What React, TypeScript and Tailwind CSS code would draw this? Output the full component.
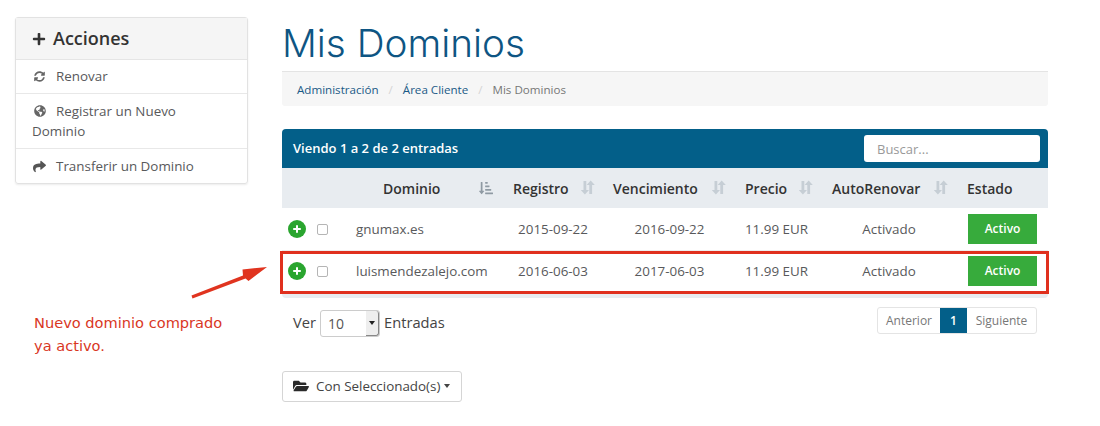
import { FaFolderOpen, FaGlobeAmericas, FaPlus, FaShare, FaSortAmountDownAlt, FaSyncAlt } from 'react-icons/fa';

const ROWS = [
  { domain: 'gnumax.es', start: '2015-09-22', end: '2016-09-22' },
  { domain: 'luismendezalejo.com', start: '2016-06-03', end: '2017-06-03' },
];

function SortIcon() {
  return (
    <svg width="15" height="15" viewBox="0 0 15 15" className="text-[#c6ced5]" fill="currentColor">
      <path d="M3.500 1h2.800v9H9l-4.100 4.500L.8 10h2.700z" />
      <path d="M9.300 14h2.800V5h2.700L10.700.5 6.600 5h2.700z" />
    </svg>
  );
}

function PlusBadge() {
  return (
    <svg width="18" height="18" viewBox="0 0 18 18" className="shrink-0">
      <circle cx="9" cy="9" r="9" fill="#2aa52f" />
      <path d="M9 5.200v7.600M5.200 9h7.600" stroke="#fff" strokeWidth="2" />
    </svg>
  );
}

function Head({ label, width, pad, sort = true, active = false }: { label: string; width: string; pad: string; sort?: boolean; active?: boolean }) {
  return (
    <th className={`${width} ${pad} h-[40px] py-0 pr-0 text-left font-semibold text-[14px] text-[#333] relative`}>
      {label}
      {sort && !active && <span className="absolute right-[9px] top-[12px]"><SortIcon /></span>}
      {active && <FaSortAmountDownAlt className="absolute right-[9px] top-[13px] text-[14px] text-[#8f9aa3]" />}
    </th>
  );
}

export default function App() {
  return (
    <div className="relative w-[1100px] h-[426px] overflow-hidden bg-white font-['Open_Sans',sans-serif] text-[13.4px] text-[#58595b]">
      <div className="flex gap-[34px] pl-[15px] pt-[17px]">
        {/* Sidebar */}
        <aside className="w-[233px] h-[167px] shrink-0 rounded-[3px] border border-[#e2e2e2] shadow-[0_1px_2px_rgba(0,0,0,0.08)]">
          <div className="h-[42px] flex items-center gap-[7px] pl-[16px] bg-[#f5f5f5] border-b border-[#e5e5e5] text-[18px] font-semibold text-[#333]">
            <FaPlus className="text-[14px]" /> Acciones
          </div>
          <div className="h-[34px] flex items-center pl-[18px] border-b border-[#e8e8e8]">
            <FaSyncAlt className="text-[11px] text-[#666] mr-[11px]" /> Renovar
          </div>
          <div className="h-[55px] pl-[16px] pt-[7px] leading-[20px] border-b border-[#e8e8e8]">
            <FaGlobeAmericas className="inline text-[12px] text-[#666] ml-[2px] mr-[10px] align-[-1px]" />
            Registrar un Nuevo<br />Dominio
          </div>
          <div className="h-[34px] flex items-center pl-[17px]">
            <FaShare className="text-[13px] text-[#555] mr-[10px]" /> Transferir un Dominio
          </div>
        </aside>

        {/* Main */}
        <main className="w-[766px]">
          <h1 className="font-['Inter',sans-serif] font-light text-[38.700px] leading-[50px] mt-[1px] text-[#0e5583]">Mis Dominios</h1>
          <nav className="mt-[3px] h-[35px] flex items-center pl-[15px] pt-[2px] rounded-b-[3px] bg-[#f6f6f6] border-t border-[#e4e4e4] text-[11.600px]">
            <span className="text-[#1a5a86]">Administración</span>
            <span className="mx-[10px] text-[#d4d4d4]">/</span>
            <span className="text-[#1a5a86]">Área Cliente</span>
            <span className="mx-[10px] text-[#d4d4d4]">/</span>
            <span className="text-[#777]">Mis Dominios</span>
          </nav>

          <section className="mt-[23px] rounded-[4px] overflow-hidden bg-[#e8ecf0]">
            <div className="h-[39px] bg-[#035f89] flex items-center justify-between pl-[11px] pr-[8px] text-white text-[13px] font-semibold">
              <span className="pt-[1px]">Viendo 1 a 2 de 2 entradas</span>
              <div className="w-[176px] h-[27px] rounded-[3px] bg-white pl-[13px] pt-[2px] flex items-center text-[13px] font-normal text-[#999]">Buscar...</div>
            </div>
            <table className="w-[766px] table-fixed border-collapse">
              <thead>
                <tr className="bg-[#e8ecf0]">
                  <Head label="" width="w-[64px]" pad="pl-0" sort={false} />
                  <Head label="Dominio" width="w-[156px]" pad="pl-[37px]" active />
                  <Head label="Registro" width="w-[102px]" pad="pl-[11px]" />
                  <Head label="Vencimiento" width="w-[131px]" pad="pl-[9px]" />
                  <Head label="Precio" width="w-[87px]" pad="pl-[10px]" />
                  <Head label="AutoRenovar" width="w-[135px]" pad="pl-[10px]" />
                  <Head label="Estado" width="w-[91px]" pad="pl-[10px]" sort={false} />
                </tr>
              </thead>
              <tbody>
                {ROWS.map((r) => (
                  <tr key={r.domain} className="h-[42px] bg-white border-b border-[#eeeeee] text-center">
                    <td className="p-0">
                      <div className="flex items-center pl-[6px]">
                        <PlusBadge />
                        <span className="ml-[11px] mt-[1px] w-[11px] h-[11px] rounded-[2px] border border-[#b5b5b5] bg-white" />
                      </div>
                    </td>
                    <td className="p-0 pl-[10px] text-left">{r.domain}</td>
                    <td className="p-0">{r.start}</td>
                    <td className="p-0">{r.end}</td>
                    <td className="p-0 pr-[4px]">11.99 EUR</td>
                    <td className="p-0 pr-[1px]">Activado</td>
                    <td className="p-0">
                      <div className="ml-[11px] w-[69px] h-[30px] bg-[#37ab3c] text-white text-[12px] font-semibold flex items-center justify-center">Activo</div>
                    </td>
                  </tr>
                ))}
              </tbody>
            </table>
            <div className="h-[5px]" />
          </section>

          <div className="mt-[9px] flex items-start justify-between pr-[11px]">
            <div className="flex items-center gap-[4px] pl-[11px] mt-[3px] text-[14.700px]">
              <span className="text-[#444] -mt-[1px]">Ver</span>
              <div className="relative w-[60px] h-[27px] rounded-[3px] border border-[#ccc] pl-[7px] flex items-center text-[14px] text-[#555]">
                10
                <span className="absolute right-0 top-0 bottom-0 w-[13px] bg-[#eeeeee] border-r border-b border-[#888] flex items-center justify-center rounded-r-[3px]">
                  <span className="border-x-[3px] border-x-transparent border-t-[4px] border-t-[#222]" />
                </span>
              </div>
              <span className="text-[#444] -mt-[1px]">Entradas</span>
            </div>
            <div className="flex h-[27px] text-[12px] rounded-[3px] border border-[#e4e4e4] overflow-hidden">
              <span className="w-[62px] pt-[1px] flex items-center justify-center text-[#777]">Anterior</span>
              <span className="w-[27px] pt-[1px] flex items-center justify-center bg-[#035f89] text-white font-semibold">1</span>
              <span className="w-[69px] pt-[1px] flex items-center justify-center text-[#777]">Siguiente</span>
            </div>
          </div>

          <button className="mt-[34px] w-[180px] h-[31px] rounded-[3px] border border-[#d5d5d5] bg-white flex items-center pl-[10px] text-[13.400px] text-[#444]">
            <FaFolderOpen className="text-[16px] text-[#2a2a2a] mr-[7px]" />
            Con Seleccionado(s)
            <span className="ml-[4px] border-x-[3.500px] border-x-transparent border-t-[4px] border-t-[#444]" />
          </button>
        </main>
      </div>

      {/* Red annotations over the screenshot */}
      <div className="absolute left-[280px] top-[251px] w-[769px] h-[43px] border-[3px] border-[#e0301e]" />
      <svg className="absolute left-[185px] top-[262px]" width="85" height="42" viewBox="0 0 85 42">
        <path d="M6.500 33.500 L58 13.500 L57.500 7.500 L82 5 L63.500 19 L60.500 16.500 L7.500 36.500 Z" fill="#e0341f" />
      </svg>
      <p className="absolute left-[34px] top-[311px] font-['DejaVu_Sans',sans-serif] text-[14.600px] leading-[23px] text-[#d9371f]">
        Nuevo dominio comprado<br />ya activo.
      </p>
    </div>
  );
}
